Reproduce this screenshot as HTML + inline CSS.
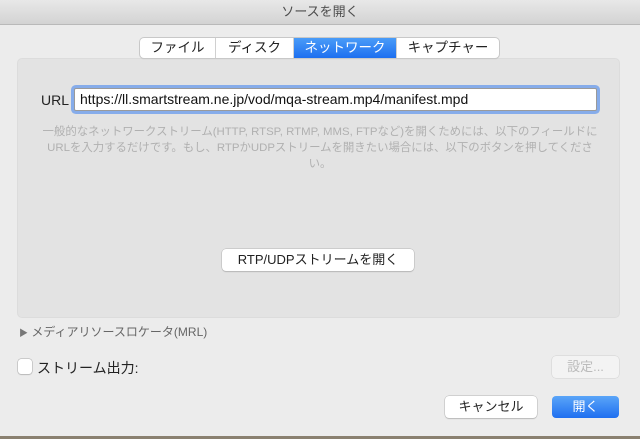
<!DOCTYPE html>
<html><head><meta charset="utf-8"><style>
body{margin:0;width:640px;height:439px;background:#ececec;font-family:"Liberation Sans","Noto Sans CJK JP",sans-serif;position:relative;overflow:hidden}
.abs{position:absolute}
.title{left:0;top:0;width:640px;height:24px;background:linear-gradient(#e8e8e8,#d3d3d3);border-bottom:1px solid #b9b9b9;text-align:center;font-size:13px;line-height:24px;color:#4d4d4d}
.panel{left:17px;top:58px;width:603px;height:260px;background:#e3e3e3;border-radius:5px;border:1px solid #dcdcdc;box-sizing:border-box}
.tabs{left:140px;top:38px;height:20px;display:flex;border-radius:4px;background:#fff;box-shadow:0 0 0 1px #c8c8c8,0 1px 1px rgba(0,0,0,.15);font-size:13.5px;line-height:20px;overflow:hidden}
.tabs div{text-align:center;color:#222;border-right:1px solid #d0d0d0}
.tabs .on{background:linear-gradient(#4a9cf8,#1d6ff0);color:#fff}
.input{left:74px;top:88px;width:523px;height:23px;box-sizing:border-box;background:#fff;border:1px solid #9a9a9a;box-shadow:0 0 0 3px #86acea;border-radius:2px;font-size:14px;line-height:21px;padding-left:5px;color:#111}
.help{left:20px;top:124px;width:600px;text-align:center;font-size:11.4px;line-height:16px;color:#b0b0b0}
.btn{background:#fff;border-radius:4px;box-shadow:0 0 0 .5px #b5b5b5,0 1px 1px rgba(0,0,0,.2);text-align:center;font-size:13px;color:#222}
</style></head><body>
<div class="abs title">ソースを開く</div>
<div class="abs panel"></div>
<div class="abs tabs"><div style="width:75px">ファイル</div><div style="width:77px">ディスク</div><div class="on" style="width:102px">ネットワーク</div><div style="width:102px;border:none">キャプチャー</div></div>
<div class="abs" style="left:41px;top:92px;font-size:14px;color:#222">URL</div>
<div class="abs input">https://ll.smartstream.ne.jp/vod/mqa-stream.mp4/manifest.mpd</div>
<div class="abs help">一般的なネットワークストリーム(HTTP, RTSP, RTMP, MMS, FTPなど)を開くためには、以下のフィールドに<br>URLを入力するだけです。もし、RTPかUDPストリームを開きたい場合には、以下のボタンを押してくださ<br>い。</div>
<div class="abs btn" style="left:222px;top:249px;width:192px;height:22px;line-height:22px">RTP/UDPストリームを開く</div>
<div class="abs" style="left:19px;top:324px;font-size:12px;color:#666;line-height:16px"><span style="font-size:9px;color:#777">▶</span> メディアリソースロケータ(MRL)</div>
<div class="abs" style="left:18px;top:359px;width:14px;height:15px;background:#fff;border-radius:3px;box-shadow:0 0 0 .5px #aaa,0 1px 1px rgba(0,0,0,.15)"></div>
<div class="abs" style="left:37px;top:358px;font-size:14px;color:#222">ストリーム出力:</div>
<div class="abs" style="left:552px;top:356px;width:67px;height:22px;background:#f3f3f3;border-radius:4px;box-shadow:0 0 0 .5px #d0d0d0;text-align:center;font-size:13px;line-height:22px;color:#bbb">設定...</div>
<div class="abs btn" style="left:445px;top:396px;width:92px;height:22px;line-height:22px">キャンセル</div>
<div class="abs" style="left:552px;top:396px;width:67px;height:22px;border-radius:4px;background:linear-gradient(#5aa5f8,#1f6ff0);text-align:center;font-size:13px;line-height:22px;color:#fff">開く</div>
<div class="abs" style="left:0;top:436px;width:640px;height:3px;background:#8a8070"></div>
</body></html>
